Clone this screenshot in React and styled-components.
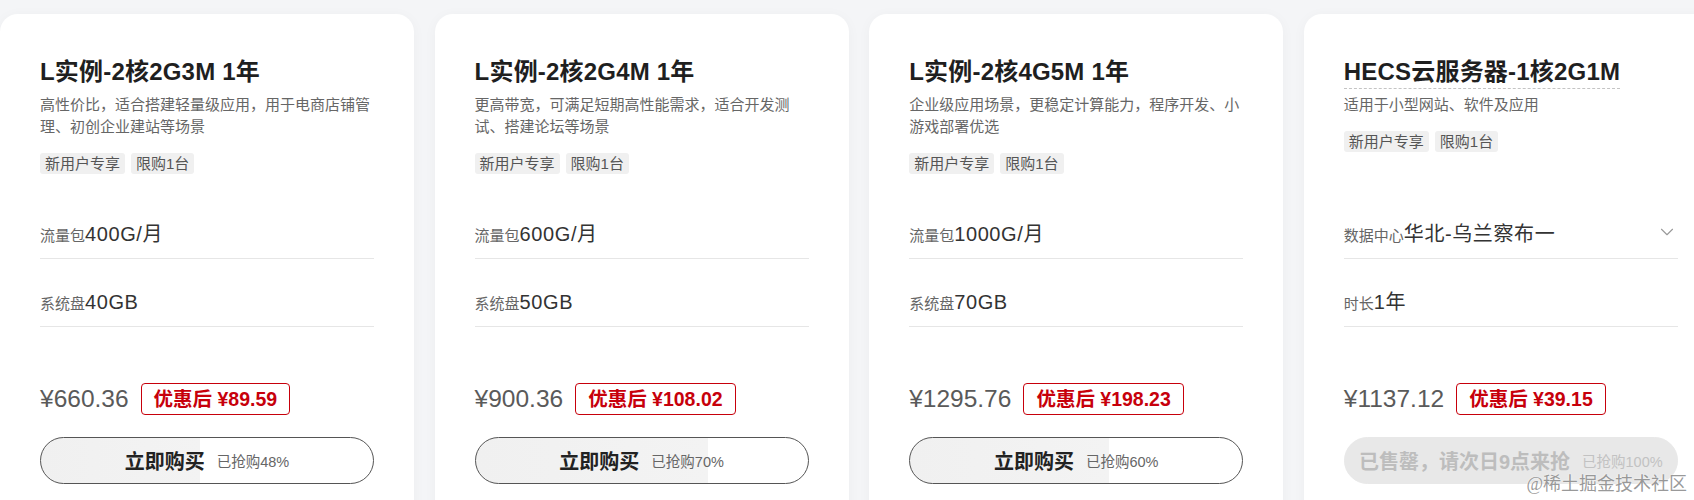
import React from "react";
import styled, { createGlobalStyle } from "styled-components";
import { ChevronDown } from "lucide-react";

const GlobalStyle = createGlobalStyle`
  html, body {
    margin: 0;
    padding: 0;
    background: #f4f5f7;
    font-family: "Liberation Sans", "Noto Sans CJK SC", sans-serif;
  }
`;

const Page = styled.div`
  position: relative;
  height: 500px;
  overflow: hidden;
  background: #f4f5f7;
`;

const Row = styled.div`
  display: flex;
  gap: 20.6px;
  padding-top: 14px;
`;

const Card = styled.div`
  flex: 0 0 414px;
  box-sizing: border-box;
  height: 520px;
  padding: 44px 40px 0;
  background: #fff;
  border-radius: 18px;
  box-shadow: 0 2px 14px rgba(0, 0, 0, 0.035);
`;

const Header = styled.div`
  height: 133px;
`;

const Title = styled.div`
  display: inline-block;
  font-size: 24px;
  line-height: 28px;
  font-weight: 700;
  letter-spacing: 0.2px;
  color: #1f1f1f;
  padding-bottom: 2px;
  border-bottom: 1px ${(p) => (p.$dashed ? "dashed #c4c4c4" : "solid transparent")};
`;

const Desc = styled.p`
  margin: 5px 0 0;
  font-size: 15px;
  line-height: 22px;
  color: #666;
`;

const Tags = styled.div`
  display: flex;
  gap: 6px;
  margin-top: 15px;
`;

const Tag = styled.span`
  padding: 0 5px;
  font-size: 15px;
  line-height: 21px;
  color: #555;
  background: #f0f0f0;
  border-radius: 3px;
`;

const Spec = styled.div`
  display: flex;
  align-items: center;
  justify-content: space-between;
  height: 68px;
  box-sizing: border-box;
  padding: 30px 0 10px;
  border-bottom: 1px solid #e6e6e6;
`;

const SpecText = styled.div`
  line-height: 28px;
`;

const Label = styled.span`
  font-size: 15px;
  color: #666;
`;

const Value = styled.span`
  font-size: 20px;
  letter-spacing: 0.6px;
  color: #333;
`;

const Arrow = styled(ChevronDown)`
  color: #999;
  margin-bottom: 6px;
`;

const PriceRow = styled.div`
  display: flex;
  align-items: center;
  gap: 12px;
  margin-top: 56px;
  height: 32px;
`;

const Price = styled.span`
  font-size: 24.5px;
  color: #5a5a5a;
`;

const Discount = styled.span`
  box-sizing: border-box;
  height: 32px;
  padding: 0 12px;
  border: 1px solid #c7000b;
  border-radius: 4px;
  font-size: 19.5px;
  line-height: 30px;
  font-weight: 700;
  color: #c7000b;
`;

const BuyButton = styled.div`
  display: flex;
  align-items: center;
  justify-content: center;
  gap: 12px;
  margin-top: 22px;
  height: 47px;
  box-sizing: border-box;
  border-radius: 24px;
  border: 1px solid ${(p) => (p.$soldOut ? "#e8e8e8" : "#555")};
  background: ${(p) =>
    p.$soldOut
      ? "#e8e8e8"
      : `linear-gradient(90deg, #f0f0f0 0, #f3f3f3 ${p.$percent}%, #fff ${p.$percent}%)`};
`;

const BuyText = styled.span`
  font-size: 20px;
  font-weight: 700;
  color: ${(p) => (p.$soldOut ? "#bdbdbd" : "#222")};
`;

const Sold = styled.span`
  font-size: 14.5px;
  color: ${(p) => (p.$soldOut ? "#c2c2c2" : "#666")};
`;

const Watermark = styled.div`
  position: absolute;
  right: 7px;
  bottom: 5px;
  font-family: "Liberation Serif", "Noto Sans CJK SC", serif;
  font-size: 18px;
  color: rgba(135, 135, 135, 0.85);
  text-shadow: 0 0 2px #fff;
`;

const products = [
  {
    title: "L实例-2核2G3M 1年",
    desc: "高性价比，适合搭建轻量级应用，用于电商店铺管理、初创企业建站等场景",
    specs: [
      ["流量包", "400G/月"],
      ["系统盘", "40GB"],
    ],
    price: "¥660.36",
    discount: "¥89.59",
    percent: 48,
  },
  {
    title: "L实例-2核2G4M 1年",
    desc: "更高带宽，可满足短期高性能需求，适合开发测试、搭建论坛等场景",
    specs: [
      ["流量包", "600G/月"],
      ["系统盘", "50GB"],
    ],
    price: "¥900.36",
    discount: "¥108.02",
    percent: 70,
  },
  {
    title: "L实例-2核4G5M 1年",
    desc: "企业级应用场景，更稳定计算能力，程序开发、小游戏部署优选",
    specs: [
      ["流量包", "1000G/月"],
      ["系统盘", "70GB"],
    ],
    price: "¥1295.76",
    discount: "¥198.23",
    percent: 60,
  },
  {
    title: "HECS云服务器-1核2G1M",
    dashed: true,
    desc: "适用于小型网站、软件及应用",
    specs: [
      ["数据中心", "华北-乌兰察布一", true],
      ["时长", "1年"],
    ],
    price: "¥1137.12",
    discount: "¥39.15",
    percent: 100,
    soldOut: true,
  },
];

function ProductCard({ item }) {
  return (
    <Card>
      <Header>
        <Title $dashed={item.dashed}>{item.title}</Title>
        <Desc>{item.desc}</Desc>
        <Tags>
          <Tag>新用户专享</Tag>
          <Tag>限购1台</Tag>
        </Tags>
      </Header>
      {item.specs.map(([label, value, select]) => (
        <Spec key={label}>
          <SpecText>
            <Label>{label}</Label>
            <Value>{value}</Value>
          </SpecText>
          {select && <Arrow size={22} strokeWidth={1.2} />}
        </Spec>
      ))}
      <PriceRow>
        <Price>{item.price}</Price>
        <Discount>优惠后 {item.discount}</Discount>
      </PriceRow>
      <BuyButton $soldOut={item.soldOut} $percent={item.percent}>
        <BuyText $soldOut={item.soldOut}>
          {item.soldOut ? "已售罄，请次日9点来抢" : "立即购买"}
        </BuyText>
        <Sold $soldOut={item.soldOut}>已抢购{item.percent}%</Sold>
      </BuyButton>
    </Card>
  );
}

export default function App() {
  return (
    <Page>
      <GlobalStyle />
      <Row>
        {products.map((item) => (
          <ProductCard key={item.title} item={item} />
        ))}
      </Row>
      <Watermark>@稀土掘金技术社区</Watermark>
    </Page>
  );
}
